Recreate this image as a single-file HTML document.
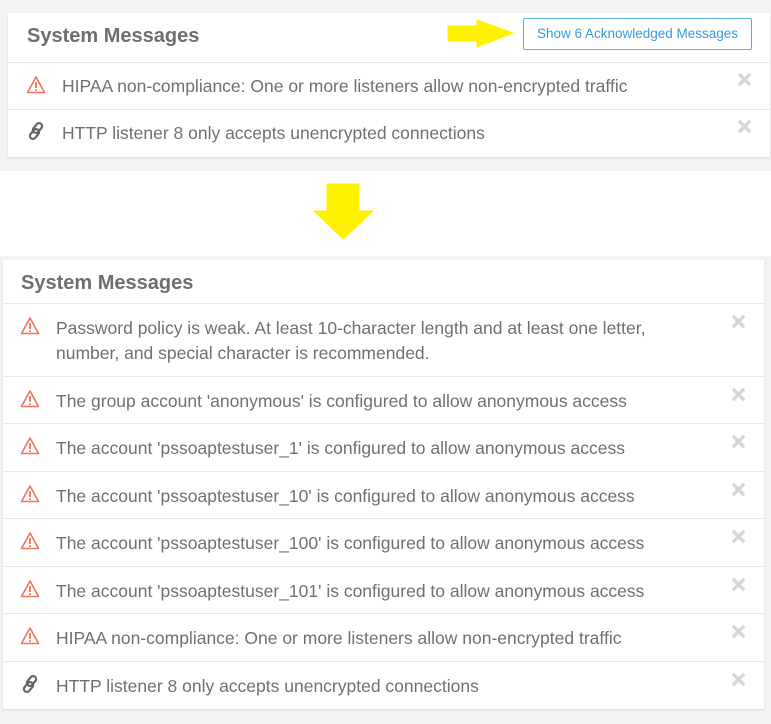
<!DOCTYPE html>
<html><head><style>
*{margin:0;padding:0;box-sizing:border-box}
body{width:771px;height:724px;background:#f3f3f3;font-family:"Liberation Sans",Arial,sans-serif;position:relative;overflow:hidden}
.white{position:absolute;left:0;top:171px;width:771px;height:85px;background:#fff}
.panel{position:absolute;background:#fff;box-shadow:0 1px 2px rgba(0,0,0,.12)}
.hdr{position:absolute;left:0;right:0;border-bottom:1px solid #e8e8e8;font-weight:bold;font-size:20px;color:#6e6e6e}
.row{position:absolute;left:0;right:0;border-bottom:1px solid #e8e8e8;font-size:17.5px;color:#707070;line-height:25px}
.row .t{position:absolute;top:11px}
.b .row .t{top:12px}
.row svg.ic{position:absolute}
.x{position:absolute;width:13px;height:13px}
.btn{position:absolute;left:523px;top:18px;width:229px;height:32px;border:1px solid #5aaede;border-radius:2px;color:#3b9ad6;font-size:13.5px;text-align:center;line-height:30px}
</style></head><body>
<div class="white"></div>

<svg width="0" height="0" style="position:absolute">
<defs>
<symbol id="warn" viewBox="0 0 20 20"><path d="M10 2 L18.5 17.5 H1.5 Z" fill="none" stroke="#f2735e" stroke-width="1.6" stroke-linejoin="round"/><rect x="9.1" y="7" width="1.8" height="6" fill="#f2735e"/><rect x="9.1" y="14.2" width="1.8" height="1.8" fill="#f2735e"/></symbol>
<symbol id="link" viewBox="0 0 20 20"><g fill="none" stroke="#666" stroke-width="2.2"><rect x="8.5" y="1.5" width="6" height="11" rx="3" transform="rotate(40 11.5 7)"/><rect x="5.5" y="7.5" width="6" height="11" rx="3" transform="rotate(40 8.5 13)"/></g></symbol>
<symbol id="x" viewBox="0 0 13 13"><path d="M2 2 L11 11 M11 2 L2 11" stroke="#d6d6d6" stroke-width="3.4" stroke-linecap="square"/></symbol>
</defs></svg>

<!-- top panel -->
<div class="panel" style="left:8px;top:13px;width:762px;height:144px">
 <div class="hdr" style="top:0;height:50px;line-height:46px;padding-left:19px">System Messages</div>
 <div class="row" style="top:50px;height:47px">
  <svg class="ic" style="left:18px;top:12px" width="20" height="20"><use href="#warn"/></svg>
  <span class="t" style="left:54px">HIPAA non-compliance: One or more listeners allow non-encrypted traffic</span>
  <svg class="x" style="left:730px;top:10px"><use href="#x"/></svg>
 </div>
 <div class="row" style="top:97px;height:47px;border-bottom:none">
  <svg class="ic" style="left:18px;top:11px" width="20" height="20"><use href="#link"/></svg>
  <span class="t" style="left:54px">HTTP listener 8 only accepts unencrypted connections</span>
  <svg class="x" style="left:730px;top:10px"><use href="#x"/></svg>
 </div>
</div>
<div class="btn">Show 6 Acknowledged Messages</div>
<svg style="position:absolute;left:440px;top:15px" width="80" height="36"><path d="M8 11 H37 V5 L73 18 L37 32 V26 H8 Z" fill="#fff200" stroke="#fff200" stroke-width="1" stroke-linejoin="round"/></svg>
<svg style="position:absolute;left:310px;top:180px" width="70" height="62"><path d="M17 4 H49 V31 H63 L33 59 L4 31 H17 Z" fill="#fff200" stroke="#fff200" stroke-width="1" stroke-linejoin="round"/></svg>

<!-- bottom panel -->
<div class="panel b" style="left:3px;top:260px;width:761px;height:449px">
 <div class="hdr" style="top:0;height:44px;line-height:46px;padding-left:18px">System Messages</div>
 <div class="row" style="top:44px;height:73px">
  <svg class="ic" style="left:17px;top:12px" width="20" height="20"><use href="#warn"/></svg>
  <span class="t" style="left:53px;width:640px">Password policy is weak. At least 10-character length and at least one letter, number, and special character is recommended.</span>
  <svg class="x" style="left:729px;top:11px"><use href="#x"/></svg>
 </div>
 <div class="row" style="top:117px;height:47px">
  <svg class="ic" style="left:17px;top:12px" width="20" height="20"><use href="#warn"/></svg>
  <span class="t" style="left:53px">The group account 'anonymous' is configured to allow anonymous access</span>
  <svg class="x" style="left:729px;top:11px"><use href="#x"/></svg>
 </div>
 <div class="row" style="top:164px;height:48px">
  <svg class="ic" style="left:17px;top:12px" width="20" height="20"><use href="#warn"/></svg>
  <span class="t" style="left:53px">The account 'pssoaptestuser_1' is configured to allow anonymous access</span>
  <svg class="x" style="left:729px;top:11px"><use href="#x"/></svg>
 </div>
 <div class="row" style="top:212px;height:47px">
  <svg class="ic" style="left:17px;top:12px" width="20" height="20"><use href="#warn"/></svg>
  <span class="t" style="left:53px">The account 'pssoaptestuser_10' is configured to allow anonymous access</span>
  <svg class="x" style="left:729px;top:11px"><use href="#x"/></svg>
 </div>
 <div class="row" style="top:259px;height:48px">
  <svg class="ic" style="left:17px;top:12px" width="20" height="20"><use href="#warn"/></svg>
  <span class="t" style="left:53px">The account 'pssoaptestuser_100' is configured to allow anonymous access</span>
  <svg class="x" style="left:729px;top:11px"><use href="#x"/></svg>
 </div>
 <div class="row" style="top:307px;height:47px">
  <svg class="ic" style="left:17px;top:12px" width="20" height="20"><use href="#warn"/></svg>
  <span class="t" style="left:53px">The account 'pssoaptestuser_101' is configured to allow anonymous access</span>
  <svg class="x" style="left:729px;top:11px"><use href="#x"/></svg>
 </div>
 <div class="row" style="top:354px;height:48px">
  <svg class="ic" style="left:17px;top:12px" width="20" height="20"><use href="#warn"/></svg>
  <span class="t" style="left:53px">HIPAA non-compliance: One or more listeners allow non-encrypted traffic</span>
  <svg class="x" style="left:729px;top:11px"><use href="#x"/></svg>
 </div>
 <div class="row" style="top:402px;height:47px;border-bottom:none">
  <svg class="ic" style="left:17px;top:12px" width="20" height="20"><use href="#link"/></svg>
  <span class="t" style="left:53px">HTTP listener 8 only accepts unencrypted connections</span>
  <svg class="x" style="left:729px;top:11px"><use href="#x"/></svg>
 </div>
</div>
</body></html>
